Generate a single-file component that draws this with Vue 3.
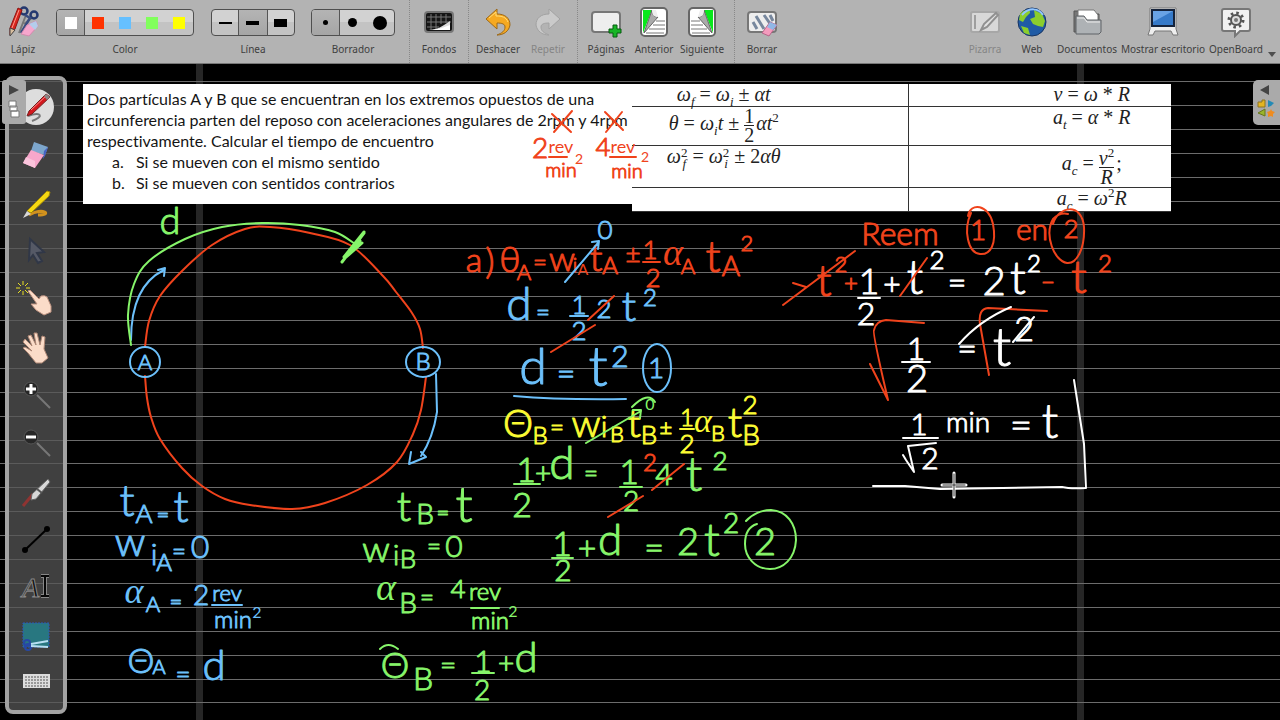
<script setup>
const colors = ['#ffffff', '#ff3300', '#66c0ff', '#81ff5c', '#ffff00']
const colorNames = ['Blanco', 'Rojo', 'Azul', 'Verde', 'Amarillo']
const lineWidths = ['fine', 'medium', 'strong']
const eraserSizes = ['small', 'mid', 'large']

const rules = Array.from({ length: 60 }, (_, i) => Math.round(17 + 23.9 * i))

const R = '#f0431c'
const B = '#6cc0fb'
const G = '#86f56a'
const Y = '#fbfb33'
const W = '#ffffff'

/* Ink text: [content, centre x, baseline y, size] grouped by pen colour */
const ink = [
  { color: R, items: [
    ['2', 540, 94, 28], ['rev', 561, 89, 18], ['min', 561, 113, 20], ['2', 579, 100, 14],
    ['4', 603, 92, 26], ['rev', 623, 89, 18], ['min', 627, 114, 20], ['2', 645, 98, 14],
    ['a', 474, 208, 34], [')', 490, 210, 36], ['θ', 510, 208, 36], ['A', 524, 216, 22], ['=', 540, 207, 24],
    ['w', 562, 207, 34], ['i', 575, 208, 20], ['A', 583, 211, 16], ['t', 596, 207, 38], ['A', 610, 210, 24],
    ['±', 633, 199, 26], ['1', 650, 195, 26], ['2', 653, 223, 26], ['α', 673, 201, 38], ['A', 688, 210, 22],
    ['t', 713, 208, 44], ['A', 731, 212, 28], ['2', 747, 187, 22],
    ['Reem', 900, 181, 32], ['1', 978, 176, 28], ['en', 1032, 176, 30], ['2', 1071, 174, 26],
    ['t', 824, 232, 44], ['2', 841, 208, 22], ['+', 851, 227, 24], ['−', 1048, 226, 24],
    ['t', 1079, 229, 46], ['2', 1105, 208, 24], ['2', 650, 407, 24]
  ] },
  { color: B, items: [
    ['A', 145, 306, 22], ['B', 423, 306, 24], ['0', 605, 175, 26],
    ['d', 519, 256, 46], ['=', 543, 257, 24], ['1', 579, 250, 26], ['2', 579, 276, 26], ['2', 604, 254, 26],
    ['t', 629, 257, 42], ['2', 650, 242, 24],
    ['d', 533, 320, 50], ['=', 566, 321, 32], ['t', 598, 322, 56], ['2', 620, 303, 30], ['1', 656, 314, 28],
    ['t', 127, 452, 44], ['A', 144, 459, 26], ['=', 163, 458, 22], ['t', 181, 458, 44],
    ['w', 130, 492, 40], ['i', 154, 501, 30], ['A', 164, 507, 24], ['=', 179, 496, 24], ['0', 200, 494, 32],
    ['α', 134, 539, 36], ['A', 153, 548, 22], ['=', 176, 545, 22], ['2', 201, 541, 28], ['rev', 227, 537, 22],
    ['min', 233, 564, 24], ['2', 257, 554, 16],
    ['Θ', 141, 609, 34], ['A', 159, 610, 20], ['=', 183, 619, 26], ['d', 214, 616, 42]
  ] },
  { color: G, items: [
    ['d', 170, 170, 38], ['0', 650, 346, 16],
    ['1', 526, 418, 34], ['2', 522, 453, 34], ['+', 543, 419, 28], ['d', 562, 415, 46], ['=', 591, 418, 24],
    ['1', 629, 420, 34], ['2', 631, 447, 28], ['4', 664, 421, 30], ['t', 694, 427, 48], ['2', 720, 406, 26],
    ['1', 562, 492, 34], ['2', 563, 517, 30], ['+', 587, 495, 32], ['d', 610, 491, 44], ['=', 654, 495, 34],
    ['2', 688, 491, 38], ['t', 712, 492, 46], ['2', 731, 469, 28], ['2', 765, 491, 38],
    ['t', 404, 457, 42], ['B', 425, 460, 28], ['=', 443, 456, 22], ['t', 464, 458, 50],
    ['w', 376, 498, 36], ['i', 396, 501, 28], ['B', 408, 504, 26], ['=', 434, 491, 24], ['0', 454, 493, 30],
    ['α', 386, 536, 38], ['B', 408, 549, 28], ['=', 427, 542, 24], ['4', 458, 534, 26], ['rev', 485, 536, 24],
    ['min', 490, 565, 24], ['2', 513, 553, 16],
    ['Θ', 395, 614, 36], ['B', 423, 626, 32], ['=', 448, 611, 28], ['1', 483, 608, 30], ['2', 482, 636, 28],
    ['+', 506, 609, 28], ['d', 526, 608, 42]
  ] },
  { color: Y, items: [
    ['Θ', 518, 373, 38], ['B', 540, 380, 24], ['=', 557, 372, 24], ['w', 586, 373, 38], ['i', 604, 373, 30],
    ['B', 617, 378, 22], ['t', 634, 373, 40], ['B', 649, 380, 26], ['±', 666, 371, 22], ['1', 687, 362, 24],
    ['2', 687, 389, 26], ['α', 703, 368, 34], ['B', 718, 377, 22], ['t', 735, 373, 42], ['B', 751, 381, 28],
    ['2', 750, 350, 26]
  ] },
  { color: W, items: [
    ['1', 869, 230, 36], ['2', 866, 261, 32], ['+', 892, 231, 30], ['t', 915, 230, 48], ['2', 937, 205, 26],
    ['=', 957, 230, 32], ['2', 994, 231, 40], ['t', 1018, 230, 46], ['2', 1034, 208, 24],
    ['1', 916, 296, 32], ['2', 917, 328, 38], ['=', 967, 296, 34], ['t', 1002, 302, 54], ['2', 1024, 277, 34],
    ['1', 919, 371, 30], ['2', 930, 405, 30], ['min', 968, 368, 28], ['=', 1021, 374, 38], ['t', 1050, 374, 48]
  ] }
]

/* Rounded polyline through the given points (Catmull-Rom to Bézier) */
function curve(points) {
  let d = `M${points[0][0]} ${points[0][1]}`
  for (let i = 0; i < points.length - 1; i++) {
    const p0 = points[i - 1] || points[i]
    const p1 = points[i]
    const p2 = points[i + 1]
    const p3 = points[i + 2] || p2
    d += ` C${p1[0] + (p2[0] - p0[0]) / 6} ${p1[1] + (p2[1] - p0[1]) / 6} ${p2[0] - (p3[0] - p1[0]) / 6} ${p2[1] - (p3[1] - p1[1]) / 6} ${p2[0]} ${p2[1]}`
  }
  return d
}

const orbitTop = curve([[145, 283], [149, 257], [160, 232], [183, 206], [212, 181], [245, 165], [270, 163], [310, 169], [350, 181], [383, 212], [396, 228], [412, 249], [420, 265], [423, 284]])
const orbitBottom = curve([[145, 312], [147, 334], [151, 353], [160, 375], [182, 404], [202, 422], [225, 435], [250, 441], [292, 445], [325, 439], [367, 421], [397, 398], [413, 370], [421, 346], [426, 313]])
const arcD = curve([[131, 281], [128, 251], [134, 220], [149, 197], [185, 175], [222, 163], [262, 159], [300, 161], [335, 168], [355, 180]])

const tools = ['Lápiz', 'Goma', 'Resaltador', 'Seleccionar', 'Interactuar', 'Mano', 'Acercar', 'Alejar', 'Puntero láser', 'Línea recta', 'Texto', 'Capturar', 'Teclado']
</script>

<template>
  <div class="app">
    <header class="bar">
      <button class="item pencil">
        <svg width="32" height="32" viewBox="0 0 32 32">
          <path d="M19 9l-7 18M17 18l9-7" stroke="#777" stroke-width="2" />
          <circle cx="17" cy="5" r="3.5" fill="none" stroke="#24386f" stroke-width="2.5" />
          <circle cx="27" cy="9" r="3.5" fill="none" stroke="#24386f" stroke-width="2.5" />
          <path d="M18 9l5 3-9 15" fill="none" stroke="#3a4d80" stroke-width="2.5" />
          <path d="M11 2l4 2L8 23l-5 6 0-7z" fill="#d8241c" stroke="#8d1612" />
          <path d="M12 4L5 22" stroke="#ff9a8a" />
          <path d="M3 22l5 2-5 6z" fill="#dac0a0" stroke="#444" />
          <path d="M20 19l9-4 2 5-9 10-8-2z" fill="#f6a6cd" stroke="#d28aae" />
          <path d="M22 18l7-3 2 5-3 4z" fill="#b3cdec" />
        </svg>
        <span>Lápiz</span>
      </button>
      <div class="group color-group">
        <div class="segments">
          <button v-for="(c, i) in colors" :key="c" :class="{ on: i === 0 }" :aria-label="colorNames[i]">
            <i class="swatch" :style="{ background: c }"></i>
          </button>
        </div>
        <span>Color</span>
      </div>
      <div class="group">
        <div class="segments">
          <button v-for="(w, i) in lineWidths" :key="w" :class="{ on: i === 1 }" :aria-label="'Línea ' + (i + 1)">
            <i class="stroke" :class="w"></i>
          </button>
        </div>
        <span>Línea</span>
      </div>
      <div class="group eraser-group">
        <div class="segments">
          <button v-for="(s, i) in eraserSizes" :key="s" :class="{ on: i === 0 }" :aria-label="'Borrador ' + (i + 1)">
            <i class="dot" :class="s"></i>
          </button>
        </div>
        <span>Borrador</span>
      </div>

      <div class="set">
        <button class="item">
          <svg width="32" height="32" viewBox="0 0 32 32">
            <rect x="2" y="6" width="28" height="20" rx="3" fill="#151515" stroke="#777" stroke-width="2" />
            <path d="M4 11h24M4 16h24M4 21h12M8 8v16M13 8v16M18 8v10M23 8v9" stroke="#777" />
            <path d="M5 24c9 0 15-4 22-9v9z" fill="#ddd" /><path d="M9 24c8-1 12-3 18-5v5z" fill="#fff" />
          </svg>
          <span>Fondos</span>
        </button>
      </div>
      <div class="set history">
        <button class="item">
          <svg width="32" height="32" viewBox="0 0 32 32">
            <path d="M4 13L15 3v5c8 0 13 4 13 11-1 6-6 10-13 10 5-2 8-4 8-8 0-3-3-4-8-4v6z" fill="#f5a922" stroke="#9b681a" />
            <path d="M7 12l7-6v4c6 0 10 1 12 6" fill="none" stroke="#ffdc79" />
          </svg>
          <span>Deshacer</span>
        </button>
        <button class="item" disabled>
          <svg width="32" height="32" viewBox="0 0 32 32">
            <path d="M28 13L17 3v5C9 8 4 12 4 19c1 6 6 10 13 10-5-2-8-4-8-8 0-3 3-4 8-4v6z" fill="#d0d0d0" stroke="#9f9f9f" />
          </svg>
          <span>Repetir</span>
        </button>
      </div>
      <div class="set pages">
        <button class="item">
          <svg width="32" height="32" viewBox="0 0 32 32">
            <rect x="2" y="6" width="28" height="20" rx="3" fill="#eee" stroke="#777" stroke-width="2" />
            <path d="M23 19h4v4h4v4h-4v4h-4v-4h-4v-4h4z" fill="#18b526" stroke="#075b10" />
          </svg>
          <span>Páginas</span>
        </button>
        <button class="item">
          <svg width="32" height="32" viewBox="0 0 32 32">
            <rect x="3" y="2" width="26" height="28" rx="4" fill="#fff" stroke="#666" stroke-width="2" />
            <path d="M5 4h9L5 27z" fill="#08e81b" />
            <path d="M18 15h9M15 19h12M11 23h16M8 27h18" stroke="#777" />
            <path d="M14 4c0 5 2 7 6 7L6 27 14 4z" fill="#aaa" stroke="#666" />
            <path d="M14 4h4l2 7c-4 0-6-2-6-7z" fill="#eee" />
          </svg>
          <span>Anterior</span>
        </button>
        <button class="item">
          <svg width="32" height="32" viewBox="0 0 32 32">
            <rect x="3" y="2" width="26" height="28" rx="4" fill="#fff" stroke="#666" stroke-width="2" />
            <path d="M18 4h9v23z" fill="#08e81b" />
            <path d="M5 15h9M5 19h12M5 23h16M6 27h18" stroke="#777" />
            <path d="M18 4c0 5-2 7-6 7l14 16L18 4z" fill="#aaa" stroke="#666" />
            <path d="M18 4h-4l-2 7c4 0 6-2 6-7z" fill="#eee" />
          </svg>
          <span>Siguiente</span>
        </button>
      </div>
      <div class="set last">
        <button class="item">
          <svg width="32" height="32" viewBox="0 0 32 32">
            <rect x="2" y="6" width="28" height="20" rx="3" fill="#eee" stroke="#777" stroke-width="2" />
            <path d="M7 16l4 7M10 10l8 13M18 9l7 10M24 9l3 6" stroke="#77879d" stroke-width="3" />
            <path d="M24 16l7 3-8 11-7-3z" fill="#f49bbd" stroke="#b76488" /><path d="M24 16l7 3-4 5-6-3z" fill="#91b7e6" />
          </svg>
          <span>Borrar</span>
        </button>
      </div>

      <nav class="modes">
        <button class="item board-mode" disabled>
          <svg width="32" height="32" viewBox="0 0 32 32">
            <rect x="2" y="6" width="28" height="20" rx="2" fill="#e2e2e2" stroke="#a5a5a5" stroke-width="2" />
            <path d="M6 9v14" stroke="#999" stroke-width="2" /><path d="M12 24l3-6L27 7l2 2-11 12z" fill="#eee" stroke="#888" stroke-width="2" />
          </svg>
          <span>Pizarra</span>
        </button>
        <button class="item web">
          <svg width="32" height="32" viewBox="0 0 32 32">
            <circle cx="16" cy="16" r="14" fill="#205ba5" stroke="#183461" />
            <path d="M4 8C9 2 15 4 14 7l-4 4-3 5-4-2zM18 4l8 4 3 7-2 6-5-1-5-2-3-5 5-2zM5 20l7 2 2 7-6-2z" fill="#8bce2d" />
            <path d="M6 9C13 1 23 2 27 9" fill="none" stroke="#91c5ff" stroke-width="2" />
          </svg>
          <span>Web</span>
        </button>
        <button class="item docs">
          <svg width="32" height="32" viewBox="0 0 32 32">
            <path d="M3 5h9l2 3h14v18H3z" fill="#777" stroke="#555" />
            <path d="M7 4h16l4 5v13H7z" fill="#fff" stroke="#777" />
            <path d="M5 28V10h8l3 4h14v12l-2 2z" fill="#aeb2b5" stroke="#5f6366" />
            <path d="M6 12h7l3 4h13" fill="none" stroke="#eee" />
          </svg>
          <span>Documentos</span>
        </button>
        <button class="item desk">
          <svg width="32" height="32" viewBox="0 0 32 32">
            <path d="M3 2h26v21l2 6h-5l-2-4H8l-2 4H1l2-6z" fill="#eee" stroke="#777" />
            <rect x="5" y="4" width="22" height="16" fill="#367ac9" stroke="#15233b" stroke-width="2" />
            <path d="M6 5h20L6 16z" fill="#69a3e5" />
          </svg>
          <span>Mostrar escritorio</span>
        </button>
        <button class="item open">
          <svg width="32" height="32" viewBox="0 0 32 32">
            <path d="M4 3h24q2 0 2 2v18q0 2-2 2h-8l-5 5v-5H4q-2 0-2-2V5q0-2 2-2z" fill="#f1f1f1" stroke="#777" stroke-width="2" />
            <circle cx="16" cy="14" r="7" fill="none" stroke="#555" stroke-width="3" stroke-dasharray="2.5 3" />
            <circle cx="16" cy="14" r="5" fill="#ddd" stroke="#555" stroke-width="2" /><circle cx="16" cy="14" r="2" fill="#777" />
          </svg>
          <span>OpenBoard</span>
        </button>
      </nav>
      <button class="more" aria-label="Más"><svg width="8" height="5"><path d="M0 0h8L4 5z" fill="#4e4e4e" /></svg></button>
    </header>

    <main class="board">
      <svg class="layer" aria-hidden="true">
        <rect x="196" y="0" width="7" height="100%" fill="#262626" />
        <rect x="1077" y="0" width="7" height="100%" fill="#262626" />
        <rect v-for="y in rules" :key="y" x="0" :y="y" width="100%" height="1" fill="#6c6c6c" />
      </svg>

      <section class="problem">
        <p>Dos partículas A y B que se encuentran en los extremos opuestos de una<br>circunferencia parten del reposo con aceleraciones angulares de 2rpm y 4rpm<br>respectivamente. Calcular el tiempo de encuentro</p>
        <ol>
          <li><span>a.</span>Si se mueven con el mismo sentido</li>
          <li><span>b.</span>Si se mueven con sentidos contrarios</li>
        </ol>
      </section>

      <table class="formulas">
        <tbody>
          <tr class="r1">
            <td><span class="f"><em>ω<sub>f</sub></em> = <em>ω<sub>i</sub></em> ± <em>αt</em></span></td>
            <td><span class="f"><em>v</em> = <em>ω</em> * <em>R</em></span></td>
          </tr>
          <tr class="r2">
            <td><span class="f"><em>θ</em> = <em>ω<sub>i</sub>t</em> ± <span class="frac"><span>1</span><span>2</span></span><em>αt</em><sup>2</sup></span></td>
            <td><span class="f"><em>a<sub>t</sub></em> = <em>α</em> * <em>R</em></span></td>
          </tr>
          <tr class="r3">
            <td><span class="f"><em>ω</em><span class="both"><span>2</span><em>f</em></span> = <em>ω</em><span class="both"><span>2</span><em>i</em></span> ± 2<em>αθ</em></span></td>
            <td><span class="f"><em>a<sub>c</sub></em> = <span class="frac tall"><span><em>v</em><sup>2</sup></span><span><em>R</em></span></span>;</span></td>
          </tr>
          <tr class="r4">
            <td></td>
            <td><span class="f"><em>a<sub>c</sub></em> = <em>ω</em><sup>2</sup><em>R</em></span></td>
          </tr>
        </tbody>
      </table>

      <svg class="layer ink">
        <g v-for="pen in ink" :key="pen.color" :fill="pen.color" :stroke="pen.color">
          <text v-for="(n, i) in pen.items" :key="i" :x="n[1]" :y="n[2]" :font-size="n[3]" :class="{ tiny: n[3] < 20, alpha: n[0] === 'α' }">{{ n[0] }}</text>
        </g>
        <g :stroke="R">
          <path :d="orbitTop" /><path :d="orbitBottom" />
          <path d="M552 50L571 68M572 47L554 68M605 48L623 66M622 48L606 68M549 93h18M610 93h26" />
          <path d="M643 198h17M551 288l44-27M588 256l26-24M608 453l35-21M652 426l32-26" />
          <path d="M783 241l72-54M793 219l13 4M900 232l27-38" />
          <path d="M968 152C970 138 989 140 993 160C997 181 990 191 980 190C968 189 963 166 971 149" />
          <path d="M1053 160C1058 142 1082 138 1084 163C1085 184 1077 200 1067 199C1054 197 1044 171 1053 155Q1060 148 1068 150" />
          <path d="M870 300L888 336C882 310 872 268 874 266Q876 257 886 256L924 259" />
          <path d="M989 311L980 260Q978 245 988 244L1047 247" />
        </g>
        <g :stroke="B">
          <ellipse cx="145" cy="298" rx="15" ry="15" /><ellipse cx="423" cy="298" rx="17" ry="15" />
          <path d="M131 276Q131 222 164 206M158 206l7-2-1 8M436 310L437 348Q433 374 421 392M411 388l-2 12 17-7-5-5" />
          <path d="M565 218L598 179M592 178l7-1-1 8M570 252h18M514 332Q560 336 626 335" />
          <ellipse cx="657" cy="304" rx="14" ry="24" />
          <path d="M212 541h30" />
        </g>
        <g :stroke="G">
          <path :d="arcD" />
          <path d="M342 198l22-29M344 193l20-25M347 192l13-15M345 194l17-15" stroke-width="3" />
          <path d="M586 379l55-32M633 346l8 0-1 8M632 343Q648 327 655 338" />
          <path d="M514 420h26M620 423h22M552 494h21M471 544h28M472 609h22M380 585q8-8 18 0" />
          <path d="M746 457C752 450 762 446 771 446C787 447 796 460 796 476C795 495 783 505 770 505C755 505 745 493 745 480C745 468 750 462 757 460" />
        </g>
        <path :stroke="Y" d="M680 365h14" />
        <g :stroke="W">
          <path d="M858 234h22M902 298h28M903 374h35M903 391l3 5 8 12-6-26 28-3M959 280Q980 256 1011 243M1013 278L1034 253" />
          <path d="M873 422L905 422L940 425L1062 423Q1070 425 1086 424L1084 380L1074 316" />
        </g>
        <path d="M942 421h24M954 409v24" stroke="#fff" stroke-width="3" />
        <path d="M943 421h22M954 410v22" stroke="#333" stroke-width="1" />
      </svg>

      <aside class="palette">
        <button v-for="(name, i) in tools" :key="name" :aria-label="name" :class="{ active: i === 0 }">
          <svg width="32" height="32" viewBox="0 0 32 32">
            <template v-if="i === 0">
              <circle cx="16" cy="16" r="18" fill="#ddd" />
              <path d="M8 25c14-5 16 1 4 5" fill="none" stroke="#777" stroke-width="2" />
              <path d="M9 20L26 3l4 3-18 17-5 2z" fill="#d3181d" stroke="#762020" /><path d="M11 19L27 4" stroke="#ff8a8a" /><path d="M26 3l4 3-3 3-3-4z" fill="#888" />
            </template>
            <template v-else-if="i === 1">
              <path d="M14 3l14 5-3 8-14-4z" fill="#7da6cc" /><path d="M28 8l-3 9-2 3 1-8z" fill="#4563c4" />
              <path d="M11 11l13 5-9 13L3 24z" fill="#f7a7cb" /><path d="M3 24l12 5v-7l-9-4z" fill="#fbc4dc" />
            </template>
            <template v-else-if="i === 2">
              <path d="M9 28c15-8 24 0 9 0" fill="none" stroke="#d2921d" stroke-width="3" />
              <path d="M7 24L27 4l3 1-1 4-18 17z" fill="#f5d713" stroke="#a58a05" /><path d="M7 24l4 3-8 4z" fill="#d8d8d8" />
            </template>
            <path v-else-if="i === 3" d="M10 4l14 13-7 1 5 8-4 2-5-8-4 5z" fill="#555966" stroke="#303747" stroke-width="2" />
            <template v-else-if="i === 4">
              <path d="M0 5h-4M6 5h4M3 2v-4M3 8v4M1 3l-3-3M5 3l3-3M1 7l-3 3M5 7l3 3" stroke="#e9df24" stroke-width="1" />
              <path d="M8 8q2-2 4 1l7 7 2-3q4-1 6 1l4 9v6l-7 3-8-5-5-6 6 0z" fill="#fbdcc8" stroke="#bd9280" />
            </template>
            <path v-else-if="i === 5" d="M5 8l7 7-4-10 3-1 5 10-2-12 3 0 3 12 2-9 3 1-1 12 4 9-6 5H16l-8-10-5-5 2-1 7 4-9-9z" fill="#fbdcc8" stroke="#ad8674" />
            <template v-else-if="i === 6 || i === 7">
              <path d="M17 16l13 13" stroke="#777" stroke-width="2" /><circle cx="11" cy="10" r="7" fill="#272727" stroke="#555" />
              <path :d="i === 6 ? 'M6 10h10M11 5v10' : 'M6 10h10'" stroke="#fff" stroke-width="3" />
            </template>
            <template v-else-if="i === 8">
              <path d="M3 31L13 19" stroke="#8f3432" stroke-width="3" /><path d="M12 19L28 4l2 3-14 17-5 1z" fill="#d7d7d7" stroke="#666" /><path d="M17 14l5 4" stroke="#555" stroke-width="2" />
            </template>
            <g v-else-if="i === 9"><path d="M5 27L27 6" stroke="#000" stroke-width="2" /><circle cx="5" cy="27" r="3" /><circle cx="27" cy="6" r="3" /></g>
            <g v-else-if="i === 10" class="type-icon"><text x="2" y="26">A</text><path d="M21 5h8M25 5v20M21 25h8" stroke="#888" stroke-width="4" /><path d="M21 5h8M25 5v20M21 25h8" stroke="#080808" stroke-width="2" /></g>
            <template v-else-if="i === 11">
              <path d="M3 4h26v24H3z" fill="#287780" stroke="#285aba" stroke-dasharray="2 1" /><circle cx="7" cy="24" r="3" fill="none" stroke="#2748a4" stroke-width="2" /><circle cx="8" cy="28" r="3" fill="none" stroke="#2748a4" stroke-width="2" /><path d="M11 25l17-3M11 27l17 1" stroke="#b7dff2" stroke-width="2" />
            </template>
            <g v-else><rect x="3" y="7" width="27" height="14" fill="#ddd" /><path d="M5 10h23M5 13h23M5 16h23M5 19h23" stroke="#555" stroke-dasharray="2 1" /></g>
          </svg>
        </button>
      </aside>

      <button class="tab left" aria-label="Mostrar páginas">
        <svg width="24" height="44"><path d="M7 5l10 5-10 5z" fill="#444" /><path d="M7 21h7v6H7zM8 26h7v5H8zM9 31h8v6H9z" fill="#fff" stroke="#777" /></svg>
      </button>
      <button class="tab right" aria-label="Mostrar biblioteca">
        <svg width="27" height="45">
          <path d="M16 5v10L7 10z" fill="#444" /><path d="M5 22h4v-2h3v7H5z" fill="#e4b521" stroke="#8c7424" /><path d="M15 20l6 3-3 3-3 1z" fill="#248ab5" /><path d="M12 29v7l-7-3z" fill="#9ab52b" stroke="#68751d" /><path d="M18 29l1 2 3 1-2 2v3l-2-1-3 1v-3l-1-2 3-1z" fill="#ef8c20" />
        </svg>
      </button>
    </main>
  </div>
</template>

<style>
html, body, #app { height: 100%; }
body { margin: 0; overflow: hidden; background: #000; }
</style>

<style scoped>
.app { display: flex; flex-direction: column; height: 100%; font-family: "Noto Sans", "Open Sans", sans-serif; }
button { padding: 0; border: 0; background: none; font: inherit; color: inherit; }
.bar { position: relative; display: flex; flex: none; height: 64px; background: #b3b3b3; border-bottom: 1px solid #777; box-sizing: border-box; color: #3e3e3e; font-size: 10px; line-height: 14px; }
.item { display: flex; flex-direction: column; align-items: center; gap: 4px; width: 48px; padding-top: 6px; white-space: nowrap; }
.item svg { flex: none; }
.item:disabled { color: #858585; }
.item:disabled svg { opacity: .8; }
.pencil { width: 46px; margin-right: 10px; }
.group { display: flex; flex-direction: column; align-items: center; gap: 6px; width: 84px; margin-right: 16px; padding-top: 9px; }
.color-group { width: 138px; margin-right: 17px; }
.eraser-group { margin-right: 14px; }
.segments { display: flex; width: 100%; height: 27px; border: 1px solid #4f4f4f; border-radius: 4px; box-sizing: border-box; overflow: hidden; background: linear-gradient(#d2d2d2 0 50%, #c3c3c3 50%); }
.segments button { display: flex; flex: 1; align-items: center; justify-content: center; }
.segments .on { background: linear-gradient(#b4b4b4, #a5a5a5); box-shadow: 1px 0 #555; }
.segments button + .on { box-shadow: 1px 0 #555, -1px 0 #555; }
.swatch { width: 12px; height: 12px; }
.stroke { width: 13px; background: #000; }
.fine { height: 2px; }
.medium { height: 4px; }
.strong { height: 8px; }
.dot { border-radius: 50%; background: #000; }
.small { width: 5px; height: 5px; }
.mid { width: 9px; height: 9px; }
.large { width: 14px; height: 14px; }
.set { display: flex; flex: none; justify-content: center; padding: 0 4px; border-left: 1px dotted #888; }
.set .item { width: 50px; }
.set.pages .item { width: 48px; }
.set.pages { padding-right: 8px; }
.set.last { padding: 0 2px; }
.modes { display: flex; gap: 6px; margin-left: auto; padding-right: 17px; }
.modes .board-mode { width: 44px; }
.modes .web { width: 38px; }
.modes .docs { width: 60px; }
.modes .desk { width: 80px; }
.modes .open { width: 54px; }
.more { position: absolute; right: 4px; bottom: 6px; display: flex; }

.board { position: relative; flex: 1; overflow: hidden; background: #000; }
.layer { position: absolute; inset: 0; width: 100%; height: 100%; }
.ink { fill: none; stroke-width: 2; stroke-linecap: round; stroke-linejoin: round; }
.ink text { font-family: Lato, "Open Sans", "Noto Sans", sans-serif; font-weight: 300; stroke-width: 1; text-anchor: middle; }
.ink .tiny { font-weight: 400; stroke: none; }
.ink .alpha { font-family: "Liberation Serif", serif; font-style: italic; stroke: none; }
.problem { position: absolute; left: 83px; top: 20px; width: 549px; height: 120px; padding: 4px; box-sizing: border-box; background: #fff; color: #151515; font-family: Lato, "Noto Sans", sans-serif; font-size: 16px; line-height: 21px; white-space: nowrap; font-variant-ligatures: none; }
.problem p { margin: 0; }
.problem ol { margin: 0; padding-left: 25px; list-style: none; }
.problem li { display: flex; }
.problem li span { width: 24px; }
.formulas { position: absolute; left: 632px; top: 20px; width: 539px; border-collapse: collapse; table-layout: fixed; background: #fff; color: #222; font-family: "Liberation Serif", serif; font-size: 20px; line-height: 20px; text-align: center; }
.formulas td { padding: 0; border-bottom: 1px solid #333; vertical-align: top; }
.formulas td:first-child { width: 276px; padding-right: 92px; border-right: 1px solid #333; box-sizing: border-box; }
.formulas td:last-child { padding-left: 104px; }
.r1 { height: 22px; }
.r2 { height: 39px; }
.r3 { height: 42px; }
.r4 { height: 24px; }
.f { white-space: nowrap; }
.f sub, .f sup { font-size: 13px; line-height: 0; }
.frac { display: inline-flex; flex-direction: column; margin-right: 2px; vertical-align: middle; line-height: 18px; text-align: center; }
.frac span:first-child { border-bottom: 1px solid #222; }
.frac.tall { padding-top: 3px; }
.both { display: inline-flex; flex-direction: column; vertical-align: middle; font-size: 13px; line-height: 11px; }

.palette { position: absolute; left: 5px; top: 12px; display: flex; flex-direction: column; width: 62px; padding: 3px 0; box-sizing: border-box; border: 4px solid #a3a3a3; border-radius: 8px; background: rgba(85, 85, 85, .75); }
.palette button { display: flex; align-items: center; justify-content: center; height: 48px; }
.palette svg { overflow: visible; }
.type-icon text { font: italic 28px "Liberation Serif", serif; fill: #111; stroke: #888; stroke-width: 1; }
.tab { position: absolute; top: 16px; display: flex; background: #aaa; }
.left { left: 2px; border-radius: 3px; }
.right { right: 0; border-radius: 5px 0 0 5px; }
</style>
